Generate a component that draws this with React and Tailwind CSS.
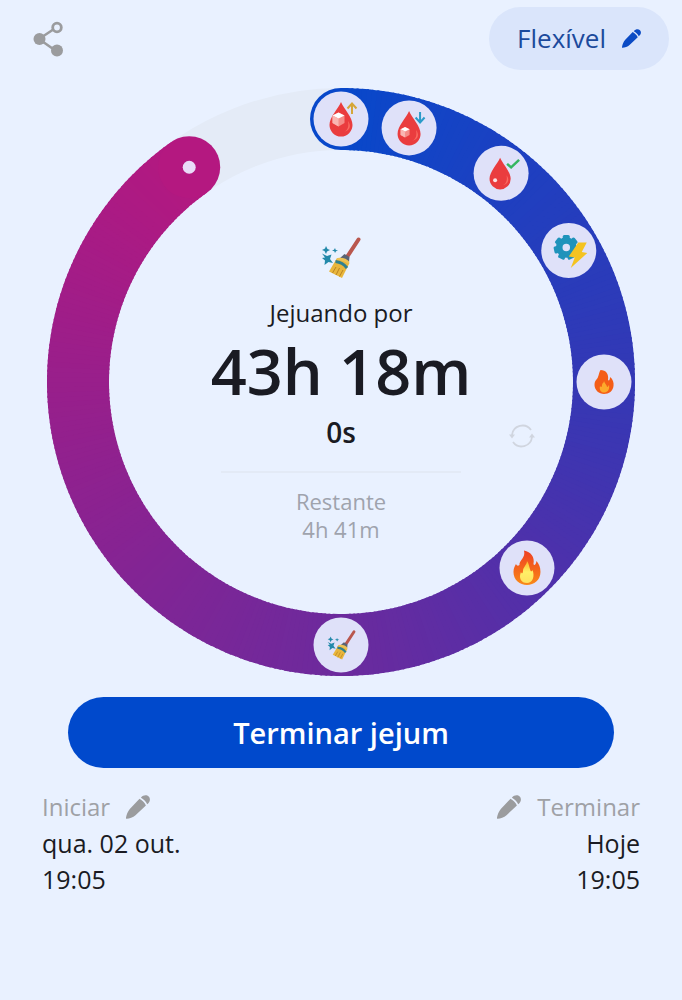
import { useId } from 'react';

const SIZE = 588;
const CENTER = SIZE / 2;
const RADIUS = 263;
const THICKNESS = 62;
const GOAL_HOURS = 48;
const ELAPSED_HOURS = 43.3;

const RING_STOPS = [
  [0, [8, 72, 202]],
  [37, [29, 64, 193]],
  [90, [52, 56, 181]],
  [135, [80, 48, 170]],
  [180, [108, 42, 157]],
  [325, [180, 24, 128]],
];

const STAGES = [
  { hour: 0, label: 'Glicose subindo', Icon: DropUp },
  { hour: 2, label: 'Glicose caindo', Icon: DropDown },
  { hour: 5, label: 'Glicose normal', Icon: DropCheck },
  { hour: 8, label: 'Metabolismo', Icon: GearBolt },
  { hour: 12, label: 'Queima de gordura', Icon: SmallFlame },
  { hour: 18, label: 'Cetose', Icon: Flame },
  { hour: 24, label: 'Autofagia', Icon: MarkerBroom },
];

function pointAt(deg, r = RADIUS) {
  const rad = ((deg - 90) * Math.PI) / 180;
  return [CENTER + r * Math.cos(rad), CENTER + r * Math.sin(rad)];
}

function colorAt(deg) {
  const i = Math.max(1, RING_STOPS.findIndex(([stop]) => stop >= deg));
  const [d0, c0] = RING_STOPS[i - 1];
  const [d1, c1] = RING_STOPS[i];
  const t = (deg - d0) / (d1 - d0);
  return `rgb(${c0.map((v, k) => Math.round(v + (c1[k] - v) * t)).join(',')})`;
}

function arc(from, to) {
  const [x0, y0] = pointAt(from);
  const [x1, y1] = pointAt(to);
  return `M${x0} ${y0}A${RADIUS} ${RADIUS} 0 ${to - from > 180 ? 1 : 0} 1 ${x1} ${y1}`;
}

function Drop() {
  return (
    <>
      <path d="M0-17C3-10 11.500-2 11.500 6A11.500 11.500 0 0 1-11.500 6C-11.500-2-3-10 0-17Z" fill="#ea3c3e" />
      <path d="M3 13C7 11 8 7 7 2C10 6 10 11 3 13Z" fill="#f96a61" />
    </>
  );
}

function Cube() {
  return (
    <>
      <path d="M-6-3.500L0-6.500L6-3.500V4L0 7.500L-6 4Z" fill="#f58c88" />
      <path d="M-6-3.500L0-6.500L6-3.500L0-.5Z" fill="#fff" />
      <path d="M-6-3.500L0-.5V7.500L-6 4Z" fill="#f9b5b2" />
    </>
  );
}

function DropUp() {
  return (
    <>
      <Drop />
      <g transform="translate(-2.500 0)">
        <Cube />
      </g>
      <path d="M11-5V-15M6.500-10.500L11-15.500L15.500-10.500" fill="none" stroke="#d5a63a" strokeWidth="2" />
    </>
  );
}

function DropDown() {
  return (
    <>
      <Drop />
      <g transform="translate(-4 4) scale(.75)">
        <Cube />
      </g>
      <path d="M11-16V-6M6.500-10.500L11-5.500L15.500-10.500" fill="none" stroke="#2a9bc9" strokeWidth="2" />
    </>
  );
}

function DropCheck() {
  return (
    <>
      <g transform="translate(-1 0) scale(.92)">
        <Drop />
      </g>
      <circle cx="-6" cy="7" r="2" fill="#fff" opacity=".85" />
      <path d="M6-9.500L10-6L18-13.500" fill="none" stroke="#35b660" strokeWidth="2.500" />
    </>
  );
}

function GearBolt() {
  return (
    <>
      <g transform="translate(-2.500 -3)">
        <circle r="7" fill="none" stroke="#1f93bb" strokeWidth="6.500" />
        {[0, 51, 103, 154, 206, 257, 309].map((a) => (
          <rect key={a} x="-3.500" y="-12.500" width="7" height="5" rx="1.500" fill="#1f93bb" transform={`rotate(${a})`} />
        ))}
      </g>
      <path d="M9.500-8H18L13 1.500L18.500 2.500L2 17.500L6 7L0 6Z" fill="#f4c321" />
    </>
  );
}

function Flame() {
  const id = useId();
  return (
    <>
      <defs>
        <linearGradient id={id} x1="0" y1="0" x2="0" y2="1">
          <stop offset="0" stopColor="#ee4023" />
          <stop offset=".55" stopColor="#f4661c" />
          <stop offset="1" stopColor="#f98a19" />
        </linearGradient>
        <linearGradient id={`${id}-core`} x1="0" y1="0" x2="0" y2="1">
          <stop offset="0" stopColor="#fbb52a" />
          <stop offset=".5" stopColor="#fff067" />
          <stop offset="1" stopColor="#ffe160" />
        </linearGradient>
      </defs>
      <path
        d="M-3-17.500C4-16 8-11 6.500-4C7-2 9-3 9.500-7C12-4 13.500-1 13.500 4C13.500 12 7 17 0 17S-13.500 12-13.500 4C-13.500 0-12-2-11-4C-10-2-9-2-7.500-3C-8-8-1-10-3-17.500Z"
        fill={`url(#${id})`}
      />
      <path
        d="M0-7C2-4 2-2 3 1C3.500 4 5 4 5.500 2C8 8 6 15 0 15S-8.500 10-6 4C-5.500 6-4 6-4 3C-4-1 0-3 0-7Z"
        fill={`url(#${id}-core)`}
      />
    </>
  );
}

function SmallFlame() {
  return (
    <>
      <path
        d="M-3.500-12C2-12 5-8 4-2C5-1 6-2 6-5C9-3 10 1 9.500 4C9 9 5 12 0 12S-9.500 8-9.500 3C-9.500-2-7-2-6-5C-5-7-5-10-3.500-12Z"
        fill="#f45d17"
      />
      <path d="M0-1C1 2 3 3 3 5C4 5 4 4 5 3C6 8 3 10.500 0 10.500S-5 8-4 4C-3 6-2 5-2 3C-2 1 0 1 0-1Z" fill="#fda92b" />
    </>
  );
}

function BroomShape() {
  return (
    <>
      <path d="M37.500 2.500L26 20" stroke="#b9574e" strokeWidth="4" strokeLinecap="round" />
      <path d="M23.500 17L28.500 20L28 25L18 22Z" fill="#5a6474" />
      <path d="M16 21L28.500 26L21 41L8 34.500Z" fill="#e9b63c" />
      <path d="M14.500 24.500C19 25 23 27 26 31" fill="none" stroke="#2f8090" strokeWidth="3" />
      <path d="M15 30L11.500 36M18.500 31L15 38M22 33L18.500 39.500" stroke="#b98422" strokeWidth="1" />
      <path d="M17 21C20 20 26 21 28.500 25L27.500 27C24 24 20 23 15.500 23Z" fill="#edc354" />
      <path
        d="M5 9L6.500 12L9 13L6 14.500L5 17L3.500 14L1 13L4 11.500ZM14 11L14.800 13L17 13.500L15 14.300L14 16L13.300 14.300L11 13.500L13 12.700ZM1 16.500L6 19L10.500 17.500L9 22L12 26L7.500 25L3.500 28L4 23.500L1 21L4 20.500Z"
        fill="#2389aa"
      />
    </>
  );
}

function MarkerBroom() {
  return (
    <g transform="translate(-14 -15) scale(.72)">
      <BroomShape />
    </g>
  );
}

function Pencil({ className }) {
  return (
    <svg viewBox="0 0 24 24" className={className} fill="currentColor" aria-hidden="true">
      <path d="M13.500 3.800C16 5 18.600 7.600 19.900 10.400L9.500 20.300C7 22.500 3.500 23.600.6 23.800C-.2 23.800-.2 23.300 0 22.600C.6 19.500 1.800 16.500 3.800 14Z" />
      <path d="M14.900 2.700C17.200-.2 20.800-.4 22.700 1.500C24.600 3.400 24.400 6.800 21.200 9.200C20 6.500 17.600 4 14.900 2.700Z" />
    </svg>
  );
}

function ShareIcon() {
  return (
    <svg viewBox="0 0 32 36" className="h-9 w-8" aria-hidden="true">
      <path d="M22 8L7 18L24 30" fill="none" stroke="#9b9c9e" strokeWidth="2.500" />
      <circle cx="7.500" cy="18" r="6" fill="#9b9c9e" />
      <circle cx="25" cy="29.500" r="6" fill="#9b9c9e" />
      <circle cx="25" cy="6.500" r="4.300" fill="#e9f1ff" stroke="#9b9c9e" strokeWidth="2.800" />
    </svg>
  );
}

function RefreshIcon() {
  return (
    <svg viewBox="0 0 26 26" className="h-[26px] w-[26px]" aria-hidden="true">
      <path d="M3 12A10.500 10.500 0 0 1 22 7M23 14A10.500 10.500 0 0 1 4 19" fill="none" stroke="#d0d5df" strokeWidth="1.800" />
      <path d="M0 11.500H6L3 15.500ZM20 14.500H26L23 10.500Z" fill="#d0d5df" />
    </svg>
  );
}

function ProgressRing() {
  const end = (ELAPSED_HOURS / GOAL_HOURS) * 360;
  const steps = 320;
  const [endX, endY] = pointAt(end);

  return (
    <svg viewBox={`0 0 ${SIZE} ${SIZE}`} className="col-start-1 row-start-1 w-full" aria-hidden="true">
      <circle cx={CENTER} cy={CENTER} r={RADIUS} fill="none" stroke="#e4ebf7" strokeWidth={THICKNESS} />
      <circle cx={CENTER} cy={CENTER - RADIUS} r={THICKNESS / 2} fill={colorAt(0)} />
      {Array.from({ length: steps }, (_, i) => {
        const from = (end / steps) * i;
        const to = Math.min(end, from + end / steps + 0.4);
        return <path key={i} d={arc(from, to)} fill="none" stroke={colorAt(from)} strokeWidth={THICKNESS} />;
      })}
      <circle cx={endX} cy={endY} r={THICKNESS / 2} fill={colorAt(end)} />
      <circle cx={endX} cy={endY} r="6.500" fill="#e9dcf8" />
      {STAGES.map(({ hour, label, Icon }) => {
        const [x, y] = pointAt((hour / GOAL_HOURS) * 360);
        return (
          <g key={label} transform={`translate(${x} ${y})`}>
            <circle r="27.500" fill="#dfe1f9" />
            <Icon />
          </g>
        );
      })}
    </svg>
  );
}

export default function App() {
  return (
    <main className="min-h-screen bg-[#e9f1ff] pb-24 font-['Open_Sans',sans-serif] text-[#1a1b23]">
      <header className="flex items-start justify-between pt-[7px] pr-[13px] pl-8">
        <button type="button" aria-label="Compartilhar" className="mt-[14px]">
          <ShareIcon />
        </button>
        <button
          type="button"
          className="flex h-[63px] items-center gap-4 rounded-full bg-[#dae5fb] px-7 text-[26px] text-[#1c4a9c]"
        >
          Flexível
          <Pencil className="h-[19px] w-[19px] text-[#0b4bc4]" />
        </button>
      </header>

      <section className="mt-[18px] grid px-[47px]">
        <ProgressRing />
        <div className="col-start-1 row-start-1 flex w-[66%] flex-col items-center justify-self-center pt-[149px]">
          <svg viewBox="0 0 40 42" className="h-[42px] w-10" fill="none" aria-hidden="true">
            <BroomShape />
          </svg>
          <h1 className="mt-[18px] text-[24px] leading-8">Jejuando por</h1>
          <p className="mt-1 text-[63px] leading-[76px] font-semibold whitespace-nowrap">43h 18m</p>
          <div className="mt-1 grid w-full grid-cols-[1fr_auto_1fr] items-center">
            <span className="col-start-2 text-[28px] leading-[38px] font-semibold">0s</span>
            <button type="button" aria-label="Atualizar" className="justify-self-end pt-2">
              <RefreshIcon />
            </button>
          </div>
          <hr className="mt-5 w-60 border-t-2 border-[#e3eaf6]" />
          <p className="mt-[14px] text-center text-[22px] leading-7 text-[#9fa3ad]">
            Restante
            <br />
            4h 41m
          </p>
        </div>
      </section>

      <div className="mt-[21px] px-[68px]">
        <button type="button" className="h-[71px] w-full rounded-full bg-[#0049cc] text-[29px] font-semibold text-white">
          Terminar jejum
        </button>
      </div>

      <section className="mt-[21px] flex justify-between px-[42px] text-[25px] leading-9">
        <div>
          <button type="button" className="flex items-center gap-4 text-[24px] text-[#9fa1a6]">
            Iniciar
            <Pencil className="h-6 w-6 text-[#9b9c9e]" />
          </button>
          <p>qua. 02 out.</p>
          <p>19:05</p>
        </div>
        <div className="flex flex-col items-end">
          <button type="button" className="flex items-center gap-4 text-[24px] text-[#9fa1a6]">
            <Pencil className="h-6 w-6 text-[#9b9c9e]" />
            Terminar
          </button>
          <p>Hoje</p>
          <p>19:05</p>
        </div>
      </section>
    </main>
  );
}
